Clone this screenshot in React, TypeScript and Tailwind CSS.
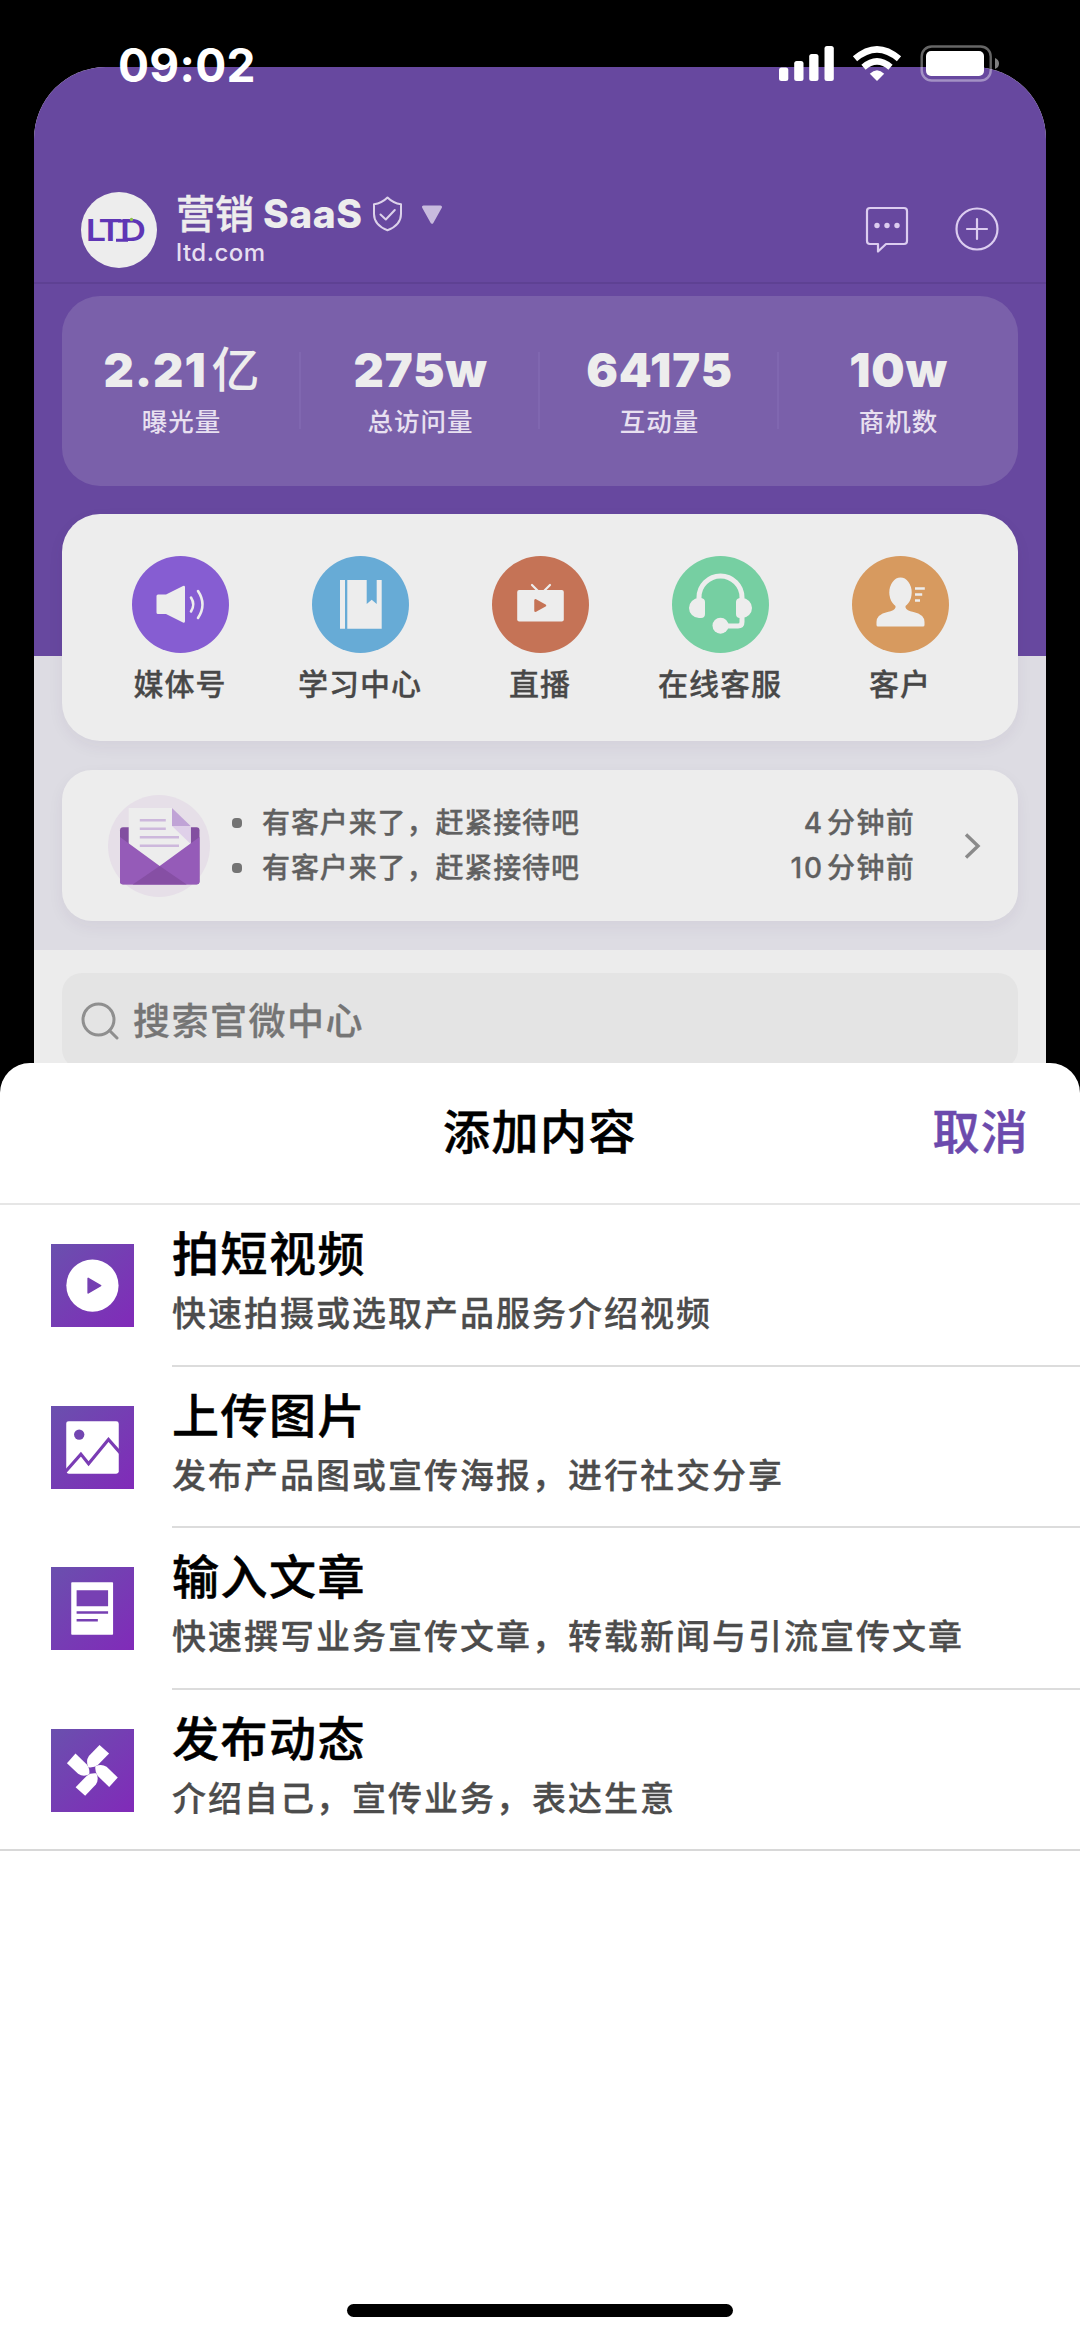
import type { ReactNode } from 'react';

const stats = [
  { id: 1, value: '2.21', unit: '亿', label: '曝光量' },
  { id: 2, value: '275w', unit: '', label: '总访问量' },
  { id: 3, value: '64175', unit: '', label: '互动量' },
  { id: 4, value: '10w', unit: '', label: '商机数' },
];

const messages = [
  { id: 1, text: '有客户来了，赶紧接待吧', num: '4', unit: '分钟前' },
  { id: 2, text: '有客户来了，赶紧接待吧', num: '10', unit: '分钟前' },
];

const shortcuts = [
  {
    label: '媒体号',
    color: 'bg-[#865dd2]',
    icon: (
      <>
        <path d="M26 38.5h8L51 30q2-.8 2 1.200v34q0 2-2 1.200L34 58h-8q-1.500 0-1.500-1.500V40q0-1.500 1.500-1.500z" fill="#ededed" />
        <path d="M59 41.500q4.500 7 0 14M66 35q9 13.500 0 27" fill="none" stroke="#ededed" strokeWidth="2.600" strokeLinecap="round" />
      </>
    ),
  },
  {
    label: '学习中心',
    color: 'bg-[#67abd6]',
    icon: <path d="M28 24h5v48.700h-5zM35.300 24h19.400v24l5-4.300 5 4.300V24h5v48.700H35.300z" fill="#ededed" />,
  },
  {
    label: '直播',
    color: 'bg-[#c57356]',
    icon: (
      <>
        <path d="M40 29l6 6M58 29l-6 6" stroke="#ededed" strokeWidth="2.200" strokeLinecap="round" />
        <rect x="25.200" y="34" width="46.600" height="31.500" rx="2" fill="#ededed" />
        <path d="M43.500 44.300v10.400L53 49.500z" fill="#c57356" stroke="#c57356" strokeWidth="2.500" strokeLinejoin="round" />
      </>
    ),
  },
  {
    label: '在线客服',
    color: 'bg-[#76cfa2]',
    icon: (
      <>
        <path d="M27 44v-2.500a21.500 21.500 0 0 1 43 0V44M70 58v8q0 4-4 4H50" fill="none" stroke="#ededed" strokeWidth="5" />
        <path d="M27 42h2q4 .5 4 4v12q0 4-4 4h-2a10 10 0 0 1 0-20zM70 42h-2q-4 .5-4 4v12q0 4 4 4h2a10 10 0 0 0 0-20z" fill="#ededed" />
        <circle cx="48.500" cy="69.700" r="8" fill="#ededed" />
      </>
    ),
  },
  {
    label: '客户',
    color: 'bg-[#d79a5f]',
    icon: (
      <>
        <ellipse cx="48.500" cy="36.500" rx="11.200" ry="15" fill="#ededed" />
        <path d="M43.500 48h10v3.500q1 3 8 4.500 11 2.500 11 10v3q0 1.500-1.500 1.500h-45q-1.500 0-1.500-1.500v-3q0-7.500 11-10 7-1.500 8-4.500z" fill="#ededed" />
        <path d="M63 32.500h9.800M63 38.500h7.200M63 44.500h5" stroke="#ededed" strokeWidth="2.600" />
      </>
    ),
  },
];

const blade = 'M48.700 16L58.300 24.600 47 36.200Q43.500 39 37.500 38.500 34.500 32.500 38 27.200z';

const actions = [
  {
    title: '拍短视频',
    desc: '快速拍摄或选取产品服务介绍视频',
    icon: (
      <>
        <circle cx="41.600" cy="41.700" r="26.200" fill="#fff" />
        <path d="M37.300 34.500v14.600l12.500-7.300z" fill="#7540b2" stroke="#7540b2" strokeWidth="1.600" strokeLinejoin="round" />
      </>
    ),
  },
  {
    title: '上传图片',
    desc: '发布产品图或宣传海报，进行社交分享',
    icon: (
      <>
        <rect x="15.300" y="15.300" width="52.700" height="52.700" rx="2.500" fill="#fff" />
        <circle cx="28.300" cy="28.700" r="5.200" fill="#7346b1" />
        <path d="M14 66.500L30 48.300l7.700 9.700 20-24.500L69.500 47" fill="none" stroke="#7a3cb4" strokeWidth="3.200" />
      </>
    ),
  },
  {
    title: '输入文章',
    desc: '快速撰写业务宣传文章，转载新闻与引流宣传文章',
    icon: (
      <>
        <rect x="20.300" y="15.300" width="42" height="52.700" rx="0.800" fill="#fff" />
        <path d="M25.700 23.300h31.600v16H25.700zM25.700 44.500h31.600v2.300H25.700zM25.700 52.300h21.300v2.300H25.700z" fill="#7740b3" />
      </>
    ),
  },
  {
    title: '发布动态',
    desc: '介绍自己，宣传业务，表达生意',
    icon: (
      <g fill="#fff">
        <path d={blade} />
        <path d={blade} transform="rotate(90 41.500 41.500)" />
        <path d={blade} transform="rotate(180 41.500 41.500)" />
        <path d={blade} transform="rotate(270 41.500 41.500)" />
      </g>
    ),
  },
];

function StatusBar() {
  return (
    <div className="absolute inset-x-0 top-0 flex h-[128px] justify-between pr-[80px] pl-[118px] text-white">
      <span className="pt-[35px] text-[46px] leading-[60px] font-bold tracking-[0.300px]">09:02</span>
      <svg className="mt-[44px]" width="222" height="40" viewBox="777 44 222 40" fill="#fff">
        <rect x="778" y="67.500" width="9.300" height="13.500" rx="2.500" />
        <rect x="793.200" y="61" width="9.300" height="20" rx="2.500" />
        <rect x="808.200" y="54" width="9.300" height="27" rx="2.500" />
        <rect x="823.500" y="46" width="9.300" height="35" rx="2.500" />
        <path d="M876 81l7.200-7.200q-7.200-7-14.400 0z" />
        <path d="M862.500 67.200q13.500-11.600 27 0" fill="none" stroke="#fff" strokeWidth="6.500" />
        <path d="M854 58.800q22-19 44 0" fill="none" stroke="#fff" strokeWidth="6.500" />
        <rect x="920.700" y="46.500" width="69" height="34" rx="10" fill="none" stroke="#fff" strokeOpacity=".4" strokeWidth="2.400" />
        <rect x="925" y="51" width="58" height="25" rx="5" />
        <path d="M994 58q4 1.500 4 5.500t-4 5.500z" fillOpacity=".5" />
      </svg>
    </div>
  );
}

function Logo() {
  return (
    <svg width="76" height="76" viewBox="0 0 76 76">
      <text x="4 14.500 32.500" y="49.500" fontSize="30" fontWeight="600" fill="#5f36b5" transform="scale(1.200 1)">LTD</text>
      <path d="M35 48.200h12M37 29h8" stroke="#5f36b5" strokeWidth="3" />
      <circle cx="50.500" cy="27.500" r="1.700" fill="#8bbf4a" />
    </svg>
  );
}

function Header() {
  return (
    <header className="flex h-[217px] items-start border-b-2 border-[#5e4193] pt-[123px] pr-[47px] pl-[47px]">
      <div className="mt-[2px] size-[76px] rounded-full bg-[#ededed]">
        <Logo />
      </div>
      <div className="ml-[19px]">
        <div className="flex h-[48px] items-center text-[#ededed]">
          <span className="text-[39px] leading-[48px] font-medium [-webkit-text-stroke:0.5px]">营销</span>
          <span className="ml-[9px] text-[39px] leading-[48px] font-extrabold tracking-[0.500px]">SaaS</span>
          <svg className="ml-[10px]" width="31" height="36" viewBox="0 0 31 36" fill="none" stroke="#dcd2ea" strokeWidth="2" strokeLinejoin="round">
            <path d="M15.500 1.500C19 5 24 7.500 29 8.300V18c0 8-5 13-13.500 16.300C7 31 2 26 2 18V8.300C7 7.500 12 5 15.500 1.500z" />
            <path d="M8.500 18.500l5.300 5 9-9.500" strokeLinecap="round" />
          </svg>
          <svg className="mt-[2px] ml-[18px]" width="22" height="20" viewBox="0 0 22 20">
            <path d="M2.500 2h17L11 17.300z" fill="#c8bbde" stroke="#c8bbde" strokeWidth="3" strokeLinejoin="round" />
          </svg>
        </div>
        <div className="mt-[-1px] text-[24px] leading-[32px] font-medium tracking-[0.500px] text-[#e6dff0]">ltd.com</div>
      </div>
      <svg className="mt-[16px] ml-auto" width="44" height="48" viewBox="0 0 44 48" fill="none" stroke="#dccdf0" strokeWidth="2.200" strokeLinejoin="round">
        <path d="M5 2h34q3 0 3 3v30q0 3-3 3H21l-8 7.500V38H5q-3 0-3-3V5q0-3 3-3z" />
        <g fill="#dccdf0" stroke="none">
          <circle cx="12" cy="19.500" r="2.700" />
          <circle cx="22" cy="19.500" r="2.700" />
          <circle cx="32" cy="19.500" r="2.700" />
        </g>
      </svg>
      <svg className="mt-[17px] ml-[46px]" width="44" height="44" viewBox="0 0 44 44" fill="none" stroke="#dccdf0" strokeWidth="2.200" strokeLinecap="round">
        <circle cx="22" cy="22" r="20.500" />
        <path d="M12 22h20M22 12v20" />
      </svg>
    </header>
  );
}

function MailIcon() {
  return (
    <svg width="102" height="102" viewBox="108 795 102 102">
      <circle cx="159" cy="846" r="51" fill="#e6dfe8" />
      <rect x="120" y="827.300" width="79.500" height="57" rx="3" fill="#824fa0" />
      <path d="M128.700 808H172l18.700 18v24L159.500 872l-30.800-22z" fill="#ededed" />
      <path d="M172 808l18.700 18H172z" fill="#c0a3d6" />
      <path d="M172 826h18.700v18z" fill="#dfd0e9" />
      <path d="M139.800 820.200h26M139.800 828.700h26M139.800 837.200H179M139.800 845.700H179" stroke="#cdb8dc" strokeWidth="2.400" />
      <path d="M120 837l39.700 29 39.800-29v44.500q0 3-3 3H123q-3 0-3-3z" fill="#955bb8" />
      <path d="M159.700 866l27 18.500h-54z" fill="#864fa4" />
    </svg>
  );
}

function ActionIcon({ id, children }: { id: string; children: ReactNode }) {
  return (
    <svg className="mt-[39px] ml-[51px] shrink-0" width="83" height="83" viewBox="0 0 83.300 83.300">
      <defs>
        <linearGradient id={id} x1="0" y1="0" x2="1" y2="1">
          <stop offset="0" stopColor="#6a50ae" />
          <stop offset="1" stopColor="#812ab9" />
        </linearGradient>
      </defs>
      <rect width="83.300" height="83.300" fill={`url(#${id})`} />
      {children}
    </svg>
  );
}

export default function App() {
  return (
    <div className="relative h-[2337px] w-[1080px] overflow-hidden bg-black pt-[67px] font-['Inter','Noto_Sans_CJK_SC',sans-serif]">
      {/* 首页 */}
      <div className="mx-[34px] h-[996px] overflow-hidden rounded-t-[72px] bg-[#ececec]">
        <div className="h-[883px] bg-[linear-gradient(#67489f_589px,#dddce3_589px)]">
          <Header />

          {/* 数据概览 */}
          <section className="mx-[28px] mt-[12px] grid h-[190px] grid-cols-4 rounded-[38px] bg-[#7a60aa]">
            {stats.map((item, i) => (
              <div key={item.id} className="relative flex flex-col items-center pt-[44px] whitespace-nowrap">
                <div className="flex items-center text-[47px] leading-[60px] font-black tracking-[0.900px] text-[#ededed]">
                  {item.value}
                  {item.unit && <span className="ml-[5px] text-[48px] font-medium tracking-normal">{item.unit}</span>}
                </div>
                <div className="mt-[3px] text-[25.500px] leading-[38px] font-medium tracking-[1px] text-[#e8e0f0]">{item.label}</div>
                {i < 3 && <span className="absolute top-[56px] right-0 h-[77px] w-[2px] bg-[#8067b0]" />}
              </div>
            ))}
          </section>

          {/* 快捷入口 */}
          <section className="mx-[28px] mt-[28px] grid h-[227px] grid-cols-5 rounded-[38px] bg-[#ededed] px-[28px] shadow-[0_6px_16px_rgba(60,40,90,0.06)]">
            {shortcuts.map((item) => (
              <div key={item.label} className="flex flex-col items-center pt-[42px]">
                <div className={`size-[97px] rounded-full ${item.color}`}>
                  <svg width="97" height="97" viewBox="0 0 97 97">{item.icon}</svg>
                </div>
                <div className="mt-[11px] text-[30px] leading-[40px] font-medium tracking-[1px] whitespace-nowrap text-[#484848] [-webkit-text-stroke:0.3px]">
                  {item.label}
                </div>
              </div>
            ))}
          </section>

          {/* 消息提醒 */}
          <section className="mx-[28px] mt-[29px] flex h-[151px] items-center rounded-[30px] bg-[#ededed] pl-[46px] shadow-[0_6px_16px_rgba(60,40,90,0.06)]">
            <MailIcon />
            <ul className="ml-[22px] w-[683px]">
              {messages.map((item) => (
                <li key={item.id} className="flex h-[45px] items-center text-[28px] leading-[45px] font-medium text-[#606060] [-webkit-text-stroke:0.3px]">
                  <span className="size-[10px] rounded-[4px] bg-[#747474]" />
                  <span className="ml-[20px] tracking-[0.900px]">{item.text}</span>
                  <span className="ml-auto tracking-[2px]">{item.num}</span>
                  <span className="ml-[3px] tracking-[1.300px]">{item.unit}</span>
                </li>
              ))}
            </ul>
            <svg className="ml-[48px]" width="20" height="28" viewBox="0 0 20 28" fill="none" stroke="#8a8a8a" strokeWidth="3.400">
              <path d="M3 2.500L15 14 3 25.500" />
            </svg>
          </section>
        </div>

        {/* 搜索 */}
        <div className="mx-[28px] mt-[23px] flex h-[96px] items-center rounded-[20px] bg-[#e4e4e4] pl-[19px]">
          <svg width="38" height="38" viewBox="0 0 38 38" fill="none" stroke="#8f8f8f" strokeWidth="3" strokeLinecap="round">
            <circle cx="17.500" cy="17.500" r="15.500" />
            <path d="M28.500 28.500l7.500 7.500" />
          </svg>
          <span className="mt-[2px] ml-[14px] text-[37px] leading-[48px] font-medium tracking-[1.500px] text-[#757575] [-webkit-text-stroke:0.3px]">
            搜索官微中心
          </span>
        </div>
      </div>

      {/* 添加内容弹层 */}
      <div className="h-[1274px] rounded-t-[30px] bg-white">
        <div className="grid h-[142px] grid-cols-3 items-start border-b-2 border-[#e6e6e6] pt-[39px] text-[47px] leading-[60px] font-medium [-webkit-text-stroke:0.5px]">
          <h2 className="col-start-2 text-center tracking-[1.500px] text-black">添加内容</h2>
          <button className="mr-[51px] justify-self-end tracking-[1.300px] text-[#6c4aad]">取消</button>
        </div>
        <ul>
          {actions.map((item, i) => (
            <li key={item.title} className="flex h-[161.500px] last:border-b-2 last:border-[#d8d8d8]">
              <ActionIcon id={`action-${i}`}>{item.icon}</ActionIcon>
              <div
                className={
                  i < actions.length - 1
                    ? 'ml-[38px] flex-1 border-b-2 border-[#dcdcdc] pt-[19px]'
                    : 'ml-[38px] flex-1 pt-[19px]'
                }
              >
                <h3 className="text-[47px] leading-[60px] font-medium tracking-[1.500px] text-black [-webkit-text-stroke:0.5px]">{item.title}</h3>
                <p className="mt-[8px] text-[34px] leading-[44px] font-medium tracking-[2px] text-[#4c4c4c] [-webkit-text-stroke:0.3px]">{item.desc}</p>
              </div>
            </li>
          ))}
        </ul>
      </div>

      <StatusBar />
      <div className="absolute bottom-[20px] left-[347px] h-[13px] w-[386px] rounded-full bg-black" />
    </div>
  );
}
